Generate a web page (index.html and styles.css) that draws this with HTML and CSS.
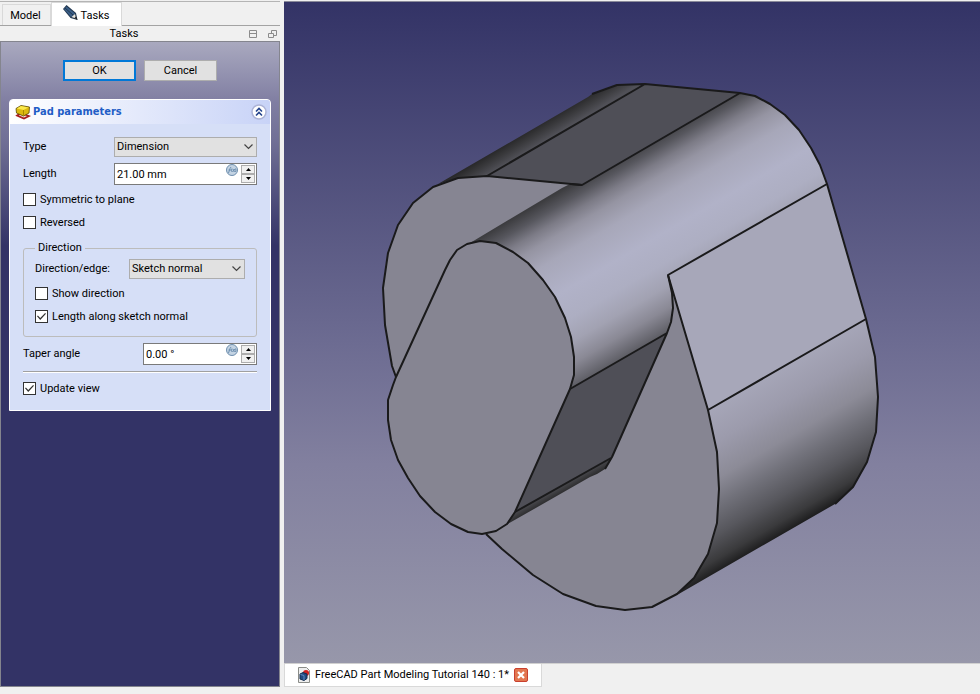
FILE: index.html
```html
<!DOCTYPE html>
<html lang="en">
<head>
<meta charset="utf-8">
<title>FreeCAD Part Modeling Tutorial 140</title>
<link rel="stylesheet" href="styles.css">
</head>
<body>
<div class="app">
  <aside class="dock">
    <nav class="dock-tabs">
      <button class="dock-tab" type="button">Model</button>
      <button class="dock-tab active" type="button">
        <svg width="16" height="16" viewBox="0 0 16 16" aria-hidden="true">
          <path d="M1 4 4.500 0 14 8 15.500 15 8.500 13z" fill="#22374f"/>
          <path d="M2 4 4.500 1.500 13 8.500 9 12z" fill="#3a5f88"/>
          <path d="M3 3 11 10" stroke="#22374f" stroke-width="1"/>
          <path d="M9.500 12 13 9 14 13.500z" fill="#e8e6df"/>
          <path d="M12.500 13 15.500 15 14 11.500z" fill="#222"/>
        </svg>
        Tasks
      </button>
    </nav>
    <header class="dock-title">
      <h1>Tasks</h1>
      <button class="title-btn" type="button" aria-label="Collapse">
        <svg width="9" height="9" viewBox="0 0 9 9"><path d="M.5 .5h7v7h-7zM.5 3.500h7" fill="none" stroke="#8c8c8c"/></svg>
      </button>
      <button class="title-btn" type="button" aria-label="Float">
        <svg width="9" height="9" viewBox="0 0 9 9"><path d="M3.500 3V.5h5v5H6M.5 3.500h5v4h-5z" fill="none" stroke="#8c8c8c"/></svg>
      </button>
    </header>
    <main class="tasks">
      <div class="actions">
        <button class="btn primary" type="button">OK</button>
        <button class="btn" type="button">Cancel</button>
      </div>
      <section class="box">
        <header class="box-head">
          <svg width="16" height="16" viewBox="0 0 16 16" aria-hidden="true">
            <path d="M2 11.500 6 9l8 3-5 2.500z" fill="#f4d9d9" stroke="#a81c1c" stroke-width="1.600"/>
            <path d="M1 4.500 6 1.500l8.500 1.500-.5 6-5.500 3L1.500 9z" fill="#dcb80f" stroke="#5c4a00" stroke-width=".8"/>
            <path d="M1.800 4.500 6 2l7.500 1.500L8.500 6z" fill="#fbe94b"/>
            <path d="M8.500 6v5.500" stroke="#a88900"/>
          </svg>
          <h2>Pad parameters</h2>
          <button class="collapse" type="button" aria-label="Collapse pad parameters">
            <svg width="16" height="16" viewBox="0 0 16 16"><circle cx="8" cy="8" r="7" fill="#fff" stroke="#acb3d6" stroke-width="1.500"/><path d="M5 7.500 8 4.500l3 3M5 11.500l3-3 3 3" fill="none" stroke="#24448c" stroke-width="1.600"/></svg>
          </button>
        </header>
        <form class="box-body">
          <div class="row">
            <label for="type">Type</label>
            <div class="combo wide">
              <select id="type"><option>Dimension</option></select>
              <svg width="9" height="6" viewBox="0 0 9 6" aria-hidden="true"><path d="M.5 .5 4.500 4.500l4-4" fill="none" stroke="#444" stroke-width="1.200"/></svg>
            </div>
          </div>
          <div class="row tall">
            <label for="length">Length</label>
            <div class="spin wide">
              <input id="length" type="text" value="21.00 mm">
              <svg class="fx" width="12" height="12" viewBox="0 0 12 12" aria-hidden="true"><circle cx="6" cy="6" r="5.500" fill="#c3d3e3" stroke="#6f8fae"/><path d="M2.500 9 4 4.500 5 3M2.500 6h2.500M6 4.500Q5 6 6 8M7 5l1.500 3M9 5 6.500 8M9.500 4.500q1 1.500 0 3.500" fill="none" stroke="#6d8fb0"/></svg>
              <span class="steps">
                <button type="button" aria-label="Increase length"><svg width="5" height="3" viewBox="0 0 5 3"><path d="M0 3h5L2.500 0z"/></svg></button>
                <button type="button" aria-label="Decrease length"><svg width="5" height="3" viewBox="0 0 5 3"><path d="M0 0h5L2.500 3z"/></svg></button>
              </span>
            </div>
          </div>
          <label class="check"><input type="checkbox">Symmetric to plane</label>
          <label class="check"><input type="checkbox">Reversed</label>
          <fieldset>
            <legend>Direction</legend>
            <div class="row">
              <label for="edge">Direction/edge:</label>
              <div class="combo">
                <select id="edge"><option>Sketch normal</option></select>
                <svg width="9" height="6" viewBox="0 0 9 6" aria-hidden="true"><path d="M.5 .5 4.500 4.500l4-4" fill="none" stroke="#444" stroke-width="1.200"/></svg>
              </div>
            </div>
            <label class="check"><input type="checkbox">Show direction</label>
            <label class="check"><input type="checkbox" checked>Length along sketch normal</label>
          </fieldset>
          <div class="row tall">
            <label for="taper">Taper angle</label>
            <div class="spin">
              <input id="taper" type="text" value="0.00 °">
              <svg class="fx" width="12" height="12" viewBox="0 0 12 12" aria-hidden="true"><circle cx="6" cy="6" r="5.500" fill="#c3d3e3" stroke="#6f8fae"/><path d="M2.500 9 4 4.500 5 3M2.500 6h2.500M6 4.500Q5 6 6 8M7 5l1.500 3M9 5 6.500 8M9.500 4.500q1 1.500 0 3.500" fill="none" stroke="#6d8fb0"/></svg>
              <span class="steps">
                <button type="button" aria-label="Increase angle"><svg width="5" height="3" viewBox="0 0 5 3"><path d="M0 3h5L2.500 0z"/></svg></button>
                <button type="button" aria-label="Decrease angle"><svg width="5" height="3" viewBox="0 0 5 3"><path d="M0 0h5L2.500 3z"/></svg></button>
              </span>
            </div>
          </div>
          <hr>
          <label class="check"><input type="checkbox" checked>Update view</label>
        </form>
      </section>
    </main>
  </aside>
  <section class="workspace">
    <div class="view">
      <svg class="model" viewBox="284 2 696 661" role="img" aria-label="Padded solid">
        <defs>
          <linearGradient id="top" gradientUnits="userSpaceOnUse" x1="440" y1="183" x2="449" y2="198">
            <stop offset="0" stop-color="#272728"/><stop offset=".5" stop-color="#3b3b3e"/><stop offset="1" stop-color="#505057"/>
          </linearGradient>
          <linearGradient id="side" gradientUnits="userSpaceOnUse" x1="472" y1="242" x2="561" y2="395">
            <stop offset="0" stop-color="#3c3c3f"/><stop offset=".07" stop-color="#57575e"/><stop offset=".14" stop-color="#7c7b86"/><stop offset=".21" stop-color="#9594a2"/><stop offset=".32" stop-color="#a7a7b9"/><stop offset=".5" stop-color="#b1b2c8"/><stop offset=".65" stop-color="#adaec2"/><stop offset=".77" stop-color="#a2a2b2"/><stop offset=".88" stop-color="#8a8995"/><stop offset="1" stop-color="#5c5c63"/>
          </linearGradient>
          <linearGradient id="lower" gradientUnits="userSpaceOnUse" x1="708" y1="410" x2="781" y2="535">
            <stop offset="0" stop-color="#a6a6b8"/><stop offset=".22" stop-color="#9c9bac"/><stop offset=".44" stop-color="#8c8b97"/><stop offset=".6" stop-color="#71717a"/><stop offset=".77" stop-color="#57575d"/><stop offset=".92" stop-color="#3a3a3c"/><stop offset="1" stop-color="#1e1e1f"/>
          </linearGradient>
          <linearGradient id="lip" gradientUnits="userSpaceOnUse" x1="515" y1="512" x2="519" y2="519">
            <stop offset="0" stop-color="#4a4a4f"/><stop offset="1" stop-color="#29292a"/>
          </linearGradient>
        </defs>
        <path fill="#868592" d="M386 262 388 253 398 225 413 203 433 187 458 178 487 176 582 185 668 275 708 410 717 452 719 489 717 523 708 554 694 578 677 594 652 607 625 610 596 606 563 594 533 575 502 549 486 534 396 377 392 366 385 325 383 288z"/>
        <path fill="url(#top)" d="M438 184 588 97 592 94 617 85 645 84 487 176 458 178z"/>
        <path fill="#4f4f57" d="M487 176 645 84 740 93 582 185z"/>
        <path fill="url(#side)" d="M470 243 557 191 562 188 570 184 582 185 740 93 755 96 770 104 785 115 799 130 811 148 820 165 827 184 668 275 672 293 673 308 671 322 667 333 570 389 480 260z"/>
        <path fill="#a7a7b9" d="M668 275 827 184 866 319 708 410z"/>
        <path fill="url(#lower)" d="M708 410 866 319 875 357 878 397 876 432 867 462 853 487 835 504 828 508 677 595 694 578 708 554 717 523 719 489 717 452z"/>
        <path fill="#4f4f57" d="M570 389 667 333 612 457 515 512z"/>
        <path fill="url(#lip)" d="M515 512 611 458 605 469 597 474 590 477 506 525z"/>
        <path fill="#868592" d="M396 377 445 270 450 260 457 250 467 244 480 241 496 243 513 252 528 263 543 280 555 297 565 318 571 337 574 357 574 375 570 389 515 512 507 524 496 531 482 534 468 532 451 524 435 512 420 496 408 478 398 460 391 440 388 420 388 400 393 385z"/>
        <g fill="none" stroke="#1a1a1b" stroke-width="2" stroke-linejoin="round">
          <path d="M396 377 392 366 385 325 383 288 388 253 398 225 413 203 433 187 458 178 487 176 582 185 740 93 755 96 770 104 785 115 799 130 811 148 820 165 827 184 866 319 875 357 878 397 876 432 867 462 853 487 835 504"/>
          <path d="M592 94 617 85 645 84 740 93M487 176 645 84M570 184 582 185M827 184 668 275 708 410 866 319"/>
          <path d="M708 410 717 452 719 489 717 523 708 554 694 578 677 594 652 607 625 610 596 606 563 594 533 575 502 549 486 534"/>
          <path d="M668 275 672 293 673 308 671 322 667 333 570 389M667 333 612 457 605 469M611 458 515 512"/>
          <path d="M396 377 445 270 450 260 457 250 467 244 480 241 496 243 513 252 528 263 543 280 555 297 565 318 571 337 574 357 574 375 570 389 515 512 507 524 496 531 482 534 468 532 451 524 435 512 420 496 408 478 398 460 391 440 388 420 388 400 393 385z"/>
        </g>
      </svg>
    </div>
    <nav class="doc-tabs">
      <div class="doc-tab">
        <svg width="12" height="16" viewBox="0 0 12 16" aria-hidden="true">
          <path d="M.5 .5h8l3 3v12H.5z" fill="#eee" stroke="#8a8c88"/>
          <circle cx="8" cy="6" r="3" fill="#d32020"/>
          <path d="M2 7 5 5.500l4 1.500v4.500L6 13.500 2 12z" fill="#234a80" stroke="#132c50"/>
          <path d="M2.500 7.500 6 8.500v4.500" fill="none" stroke="#5e8ac2"/>
        </svg>
        <a href="#">FreeCAD Part Modeling Tutorial 140 : 1*</a>
        <button class="close" type="button" aria-label="Close">
          <svg width="14" height="14" viewBox="0 0 14 14"><rect x=".5" y=".5" width="13" height="13" rx="1.500" fill="#e2764f" stroke="#c9402f"/><path d="m4 4 6 6M10 4l-6 6" stroke="#fff" stroke-width="2.200"/></svg>
        </button>
      </div>
    </nav>
  </section>
</div>
</body>
</html>
```
FILE: styles.css
```css
* { box-sizing: border-box; }

body {
  margin: 0;
  background: #f0f0f0;
  color: #000;
  font: 11px/14px Roboto, Tahoma, "DejaVu Sans", sans-serif;
}

button, input, select { font: inherit; color: inherit; margin: 0; padding: 0; }
button { border: 0; background: none; }
svg { display: block; flex: none; }
h1, h2 { margin: 0; font: inherit; }

.app {
  display: grid;
  grid-template-columns: 280px 1fr;
  column-gap: 4px;
  min-height: 100vh;
  padding-bottom: 7px;
  border-top: 1px solid #f0f0f0;
}

.dock { display: flex; flex-direction: column; border-top: 1px solid #b4b4b4; }

.dock-tabs {
  display: flex;
  align-items: flex-end;
  height: 24px;
  padding-left: 2px;
  border-bottom: 1px solid #a3a3a3;
}
.dock-tab {
  width: 49px;
  height: 21px;
  padding: 2px 2px 0 0;
  border: 1px solid #d9d9d9;
  border-bottom: 0;
  background: #f0f0f0;
}
.dock-tab.active {
  display: flex;
  align-items: center;
  justify-content: center;
  gap: 3px;
  width: 71px;
  height: 24px;
  margin-bottom: -1px;
  background: #fff;
}
.dock-tab.active svg { align-self: flex-start; }

.dock-title {
  display: flex;
  align-items: center;
  gap: 10px;
  height: 15px;
  padding: 1px 3px 0 0;
}
.dock-title h1 { flex: 1; padding-left: 9px; text-align: center; }

.tasks {
  flex: 1;
  padding: 18px 8px;
  border: 1px solid #84858e;
  background: linear-gradient(#a9a9bf, #807ea2 60px, #706f95 100px, #333366 204px) #333366;
}

.actions { display: flex; justify-content: center; gap: 8px; padding-bottom: 18px; }
.btn { width: 73px; height: 21px; border: 1px solid #adadad; background: #e1e1e1; }
.btn.primary { border: 2px solid #0078d7; }

.box {
  border: 1px solid #fff;
  border-radius: 4px 4px 0 0;
  background: #d6dff7;
}
.box-head {
  display: flex;
  align-items: center;
  gap: 2px;
  height: 24px;
  padding: 0 3px 0 5px;
  border-radius: 3px 3px 0 0;
  background: linear-gradient(90deg, #fff, #c8d3f7);
}
.box-head h2 { flex: 1; color: #215dc6; font: bold 11px/14px "DejaVu Sans Condensed", Tahoma, sans-serif; }

.box-body { padding: 13px 13px 15px; }

.row { display: flex; align-items: center; justify-content: space-between; height: 20px; }
.row.tall { height: 22px; }

.combo, .spin { display: flex; align-items: center; position: relative; width: 114px; height: 100%; }
.combo { width: 116px; }
.wide { width: 143px; }
.combo select {
  appearance: none;
  width: 100%;
  height: 100%;
  padding: 0 18px 0 2px;
  border: 1px solid #adadad;
  border-radius: 0;
  background: #e1e1e1;
}
.combo svg { position: absolute; right: 4px; pointer-events: none; }

.spin { border: 1px solid #7a7a7a; background: #fff; }
.spin input { flex: 1; min-width: 0; height: 100%; padding-left: 2px; border: 0; background: none; }
.fx { align-self: flex-start; margin-right: 3px; }
.steps { display: grid; grid-template-rows: 1fr 1fr; width: 14px; height: 18px; margin-right: 1px; }
.steps button {
  display: grid;
  place-items: center;
  border: 1px solid #adadad;
  background: #f0f0f0;
}

.box-body .row + .row { margin-top: 6px; }

.check { display: flex; align-items: center; gap: 4px; width: max-content; height: 13px; margin-top: 10px; }
.row + .check { margin-top: 8px; }
.check input {
  appearance: none;
  position: relative;
  width: 13px;
  height: 13px;
  border: 1px solid #333;
  background: #fff;
}
.check input:checked::before {
  content: "";
  position: absolute;
  inset: 1px;
  background: #333;
  clip-path: polygon(0 48%, 10% 38%, 36% 66%, 90% 10%, 100% 20%, 36% 88%);
}

fieldset {
  min-width: 0;
  margin: 12px 0 6px;
  padding: 4px 11px 13px;
  border: 1px solid #bcbcbc;
  border-radius: 3px;
}
legend { padding: 0 3px; }

hr { height: 2px; margin: 6px 0 0; border: 0; border-top: 1px solid #a0a0a0; border-bottom: 1px solid #fff; }
hr + .check { margin-top: 9px; }

.workspace { display: flex; flex-direction: column; min-width: 0; border-top: 1px solid #8a8a9a; }
.view { display: flex; flex: 1; min-height: 0; background: linear-gradient(#333366, #6d6c92 52%, #82809f 70%, #9797aa); }
.model { flex: 1; min-width: 0; width: 100%; }

.doc-tabs { display: flex; border-top: 1px solid #d0d0d0; }
.doc-tab {
  display: flex;
  align-items: center;
  gap: 5px;
  height: 23px;
  padding: 0 13px;
  border: 1px solid #d9d9d9;
  border-top: 0;
  background: #fff;
}
.doc-tab a { color: inherit; text-decoration: none; }
```
